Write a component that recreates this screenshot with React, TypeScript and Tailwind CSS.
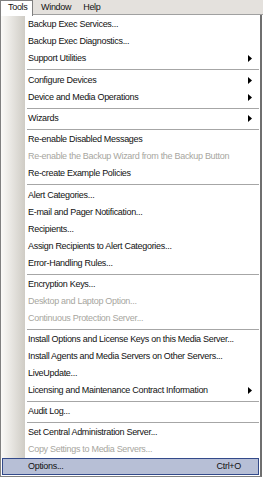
import React from "react";

type Item =
  | { sep: true }
  | { label: string; off?: boolean; sub?: boolean; key?: string; hot?: boolean };

const items: Item[] = [
  { label: "Backup Exec Services..." },
  { label: "Backup Exec Diagnostics..." },
  { label: "Support Utilities", sub: true },
  { sep: true },
  { label: "Configure Devices", sub: true },
  { label: "Device and Media Operations", sub: true },
  { sep: true },
  { label: "Wizards", sub: true },
  { sep: true },
  { label: "Re-enable Disabled Messages" },
  { label: "Re-enable the Backup Wizard from the Backup Button", off: true },
  { label: "Re-create Example Policies" },
  { sep: true },
  { label: "Alert Categories..." },
  { label: "E-mail and Pager Notification..." },
  { label: "Recipients..." },
  { label: "Assign Recipients to Alert Categories..." },
  { label: "Error-Handling Rules..." },
  { sep: true },
  { label: "Encryption Keys..." },
  { label: "Desktop and Laptop Option...", off: true },
  { label: "Continuous Protection Server...", off: true },
  { sep: true },
  { label: "Install Options and License Keys on this Media Server..." },
  { label: "Install Agents and Media Servers on Other Servers..." },
  { label: "LiveUpdate..." },
  { label: "Licensing and Maintenance Contract Information", sub: true },
  { sep: true },
  { label: "Audit Log..." },
  { sep: true },
  { label: "Set Central Administration Server..." },
  { label: "Copy Settings to Media Servers...", off: true },
  { label: "Options...", key: "Ctrl+O", hot: true },
];

// sizes of the separators, top to bottom
const sepHeights = [5, 4, 4, 5, 4, 4, 4, 4];

const Gutter = () => (
  <div className="w-[24px] shrink-0 self-stretch bg-gradient-to-r from-[#fbfaf8] to-[#cfccc5]" />
);

const Arrow = () => (
  <svg width="4" height="7" viewBox="0 0 4 7" className="mr-[8px]">
    <path d="M0 0 L4 3.5 L0 7 Z" fill="#000" />
  </svg>
);

export default function App() {
  let sepCount = 0;
  return (
    <div
      className="w-[263px] h-[480px] overflow-hidden bg-white text-[9px] tracking-[-0.3px] text-[#111]"
      style={{ fontFamily: '"Liberation Sans", Arial, sans-serif' }}
    >
      {/* menu bar */}
      <div className="h-[15px] flex bg-[#e4e1dd]">
        <div className="w-[33px] h-[16px] border border-b-0 border-[#808080] bg-white pl-[7px] leading-[13px]">
          Tools
        </div>
        <div className="flex-1 border-b border-[#a0a0a0] flex leading-[14px]">
          <span className="ml-[8px]">Window</span>
          <span className="ml-[12px]">Help</span>
        </div>
      </div>

      {/* dropdown */}
      <div className="w-[262px] border-l border-b border-[#808080] border-r-2 border-r-[#6f6f6f] pt-px pb-px bg-white">
        {items.map((it, i) => {
          if ("sep" in it) {
            const h = sepHeights[sepCount++];
            return (
              <div key={i} className="flex" style={{ height: h }}>
                <Gutter />
                <div className="flex-1 flex items-center pl-[2px] pr-[1px]">
                  <div className="h-px w-full bg-[#a6a6a6]" />
                </div>
              </div>
            );
          }
          if (it.hot) {
            return (
              <div
                key={i}
                className="h-[17px] flex items-center border border-[#334a8a] bg-[#b7bfd6] mx-px"
              >
                <span className="ml-[25px]">{it.label}</span>
                <span className="ml-auto mr-[17px]">{it.key}</span>
              </div>
            );
          }
          return (
            <div key={i} className="h-[17px] flex items-center">
              <Gutter />
              <span
                className={
                  "ml-[3px] whitespace-nowrap " + (it.off ? "text-[#a7a6a0]" : "")
                }
              >
                {it.label}
              </span>
              <span className="ml-auto" />
              {it.sub && <Arrow />}
            </div>
          );
        })}
      </div>
    </div>
  );
}
